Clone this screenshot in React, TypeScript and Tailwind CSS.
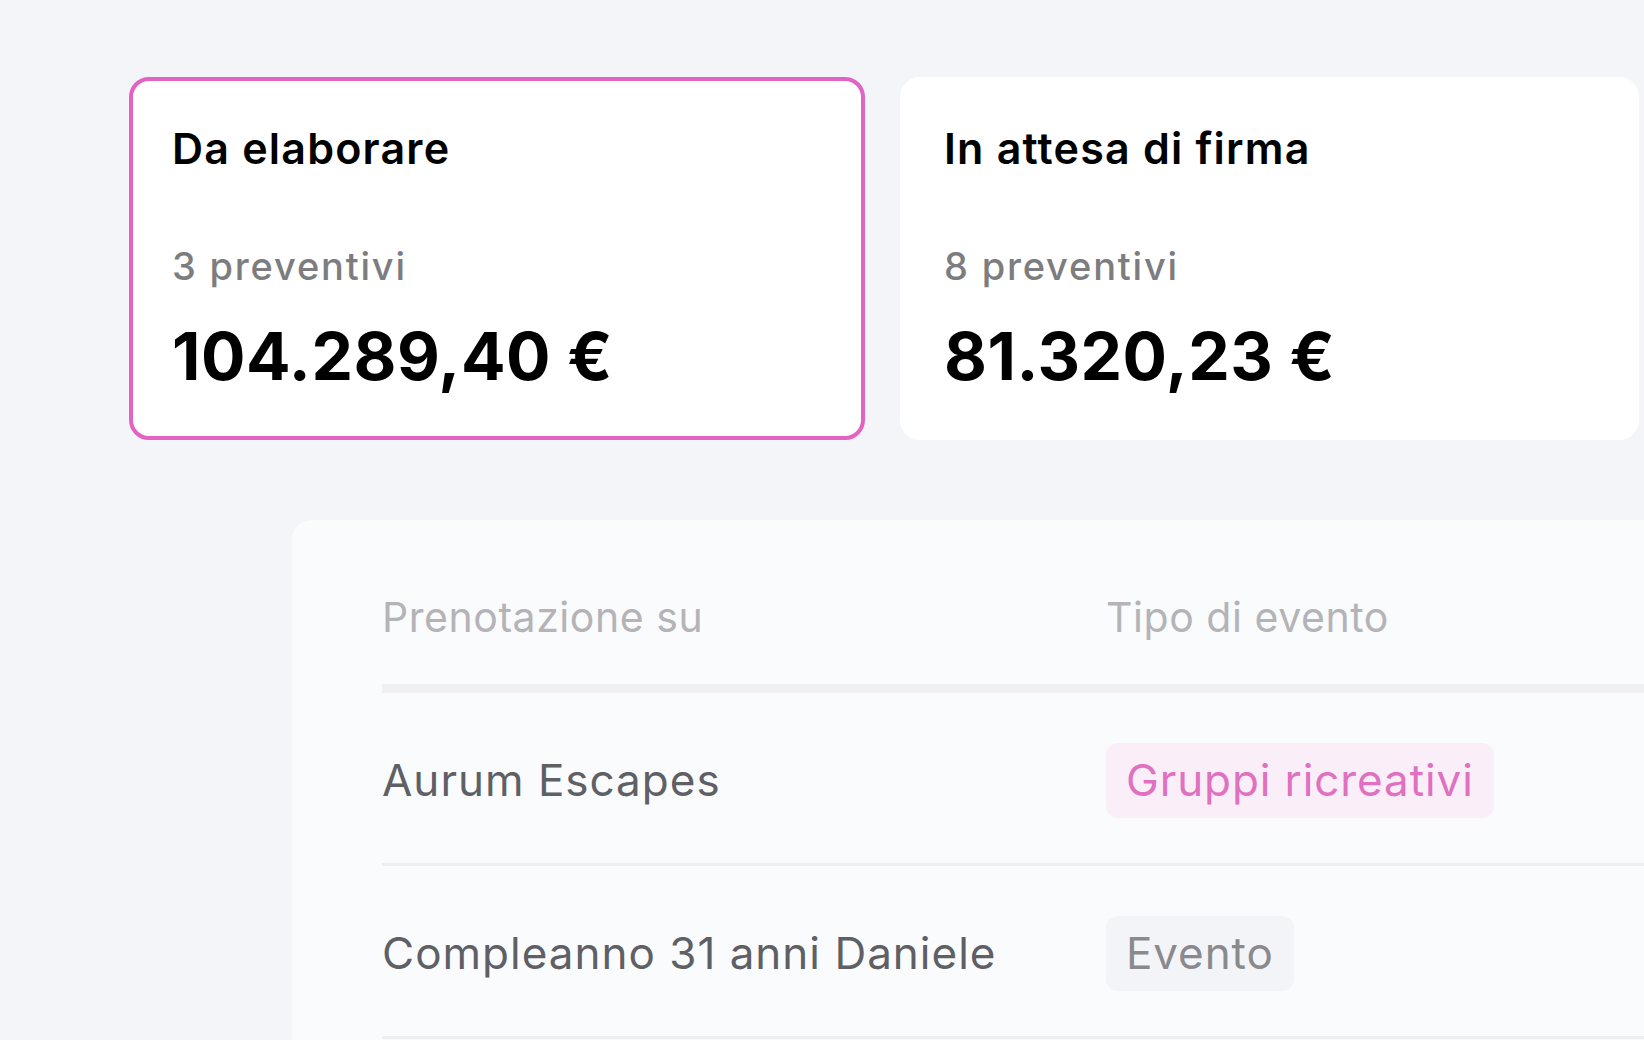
import React from "react";

function StatCard({
  title,
  count,
  amount,
  active,
}: {
  title: string;
  count: string;
  amount: string;
  active?: boolean;
}) {
  return (
    <div
      className={
        active
          ? "w-[736px] shrink-0 rounded-[20px] border-4 border-[#e462c2] bg-white px-[39px] pt-[42px] pb-[40px]"
          : "w-[739px] shrink-0 rounded-[20px] border-4 border-white bg-white px-[40px] pt-[42px] pb-[40px]"
      }
    >
      <div className="text-[43px] font-semibold leading-[51px] text-black tracking-[1.2px]">{title}</div>
      <div className="mt-[70px] text-[38px] font-medium leading-[44px] text-[#7d7d80] tracking-[1.8px]">{count}</div>
      <div className="mt-[28px] text-[66px] font-bold leading-[80px] text-black tracking-[0.5px]">{amount}</div>
    </div>
  );
}

function Row({
  name,
  tag,
  pink,
}: {
  name: string;
  tag: string;
  pink?: boolean;
}) {
  return (
    <div className="flex items-center border-b-[3px] border-[#eeeef1] pt-[50px] pb-[45px]">
      <div className="w-[724px] shrink-0 text-[44px] leading-[51px] tracking-[1px] text-[#5f5f66]">{name}</div>
      <div
        className={
          pink
            ? "flex h-[75px] items-center rounded-[12px] bg-[#faeef8] px-[20px] text-[44px] leading-[51px] tracking-[0.9px] text-[#e070c0]"
            : "flex h-[75px] items-center rounded-[12px] bg-[#f3f4f7] px-[20px] text-[44px] leading-[51px] tracking-[0.9px] text-[#8a8a8e]"
        }
      >
        {tag}
      </div>
    </div>
  );
}

export default function App() {
  return (
    <div
      className="h-[1040px] w-[1644px] overflow-hidden bg-[#f4f5f8]"
      style={{ fontFamily: "Inter, 'Noto Sans', sans-serif" }}
    >
      <div className="flex gap-[35px] pl-[129px] pt-[77px]">
        <StatCard title="Da elaborare" count="3 preventivi" amount="104.289,40 €" active />
        <StatCard title="In attesa di firma" count="8 preventivi" amount="81.320,23 €" />
      </div>
      <div className="ml-[292px] mt-[80px] h-[700px] rounded-tl-[20px] bg-[#fafbfc] pl-[90px] pt-[72px]">
        <div className="flex border-b-[9px] border-[#f0f0f2] pb-[42px]">
          <div className="w-[724px] shrink-0 text-[41px] leading-[50px] tracking-[0.55px] text-[#b4b4b8]">Prenotazione su</div>
          <div className="text-[41px] leading-[50px] tracking-[0.55px] text-[#b4b4b8]">Tipo di evento</div>
        </div>
        <Row name="Aurum Escapes" tag="Gruppi ricreativi" pink />
        <Row name="Compleanno 31 anni Daniele" tag="Evento" />
      </div>
    </div>
  );
}
